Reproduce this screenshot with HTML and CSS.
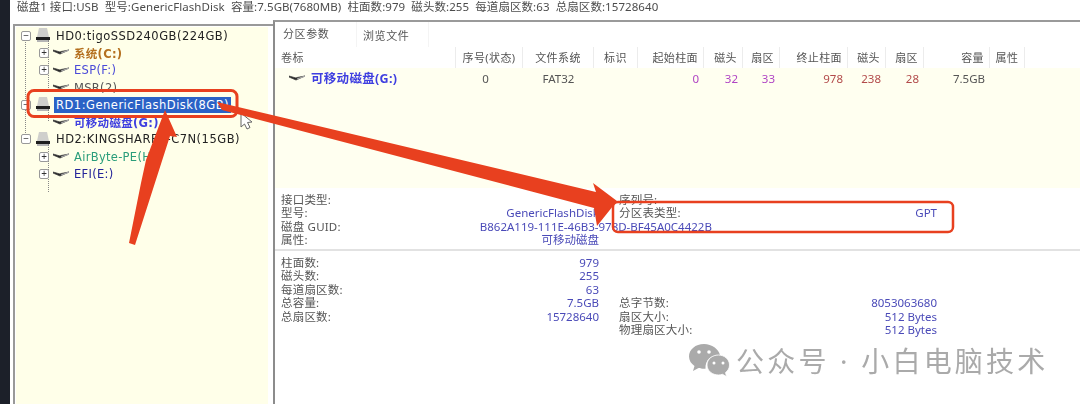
FILE: index.html
```html
<!DOCTYPE html>
<html lang="zh-CN">
<head>
  <meta charset="UTF-8">
  <title>分区信息</title>
  <link rel="stylesheet" href="styles.css">
</head>
<body>

<svg class="icon-defs" width="0" height="0">
  <symbol id="disk" viewBox="0 0 14 15">
    <path d="M3 0h8l2 9H1z" fill="#cfcfcc"/>
    <rect x="0" y="9" width="14" height="3" fill="#1f1f1f"/>
    <rect x="1" y="12" width="12" height="2" fill="#b5b5b5"/>
  </symbol>
  <symbol id="part" viewBox="0 0 16 7">
    <path d="M0 2l7 3 9-4-8 1.5-1 .5-7-2z" fill="#1f1f1f" stroke="#444" stroke-width=".8"/>
    <path d="M8 4l8-3" stroke="#aaa" stroke-width="1.2"/>
  </symbol>
</svg>

<div class="window">
  <div class="rail"></div>
  <div class="main">

    <!-- Barra superior -->
    <div class="status">磁盘1 接口:USB &nbsp;型号:GenericFlashDisk &nbsp;容量:7.5GB(7680MB) &nbsp;柱面数:979 &nbsp;磁头数:255 &nbsp;每道扇区数:63 &nbsp;总扇区数:15728640</div>

    <div class="panes">

      <!-- Árbol de discos -->
      <div class="tree-pane">
        <div class="tree">
          <div class="tree-row"><span class="tree-box">−</span><svg class="disk-icon"><use href="#disk"/></svg><span class="disk-name">HD0:tigoSSD240GB(224GB)</span></div>
          <div class="tree-children">
            <div class="tree-row child"><span class="tree-box">+</span><svg class="part-icon"><use href="#part"/></svg><span class="part-name brown">系统(C:)</span></div>
            <div class="tree-row child"><span class="tree-box">+</span><svg class="part-icon"><use href="#part"/></svg><span class="part-name blue">ESP(F:)</span></div>
            <div class="tree-row child no-box"><svg class="part-icon"><use href="#part"/></svg><span class="part-name grey">MSR(2)</span></div>
          </div>
          <div class="tree-row"><span class="tree-box">−</span><svg class="disk-icon"><use href="#disk"/></svg><span class="disk-name selected">RD1:GenericFlashDisk(8GB)</span></div>
          <div class="tree-children short">
            <div class="tree-row child no-box"><svg class="part-icon"><use href="#part"/></svg><span class="part-name strong">可移动磁盘(G:)</span></div>
          </div>
          <div class="tree-row"><span class="tree-box">−</span><svg class="disk-icon"><use href="#disk"/></svg><span class="disk-name">HD2:KINGSHARES-C7N(15GB)</span></div>
          <div class="tree-children">
            <div class="tree-row child"><span class="tree-box">+</span><svg class="part-icon"><use href="#part"/></svg><span class="part-name green">AirByte-PE(H:)</span></div>
            <div class="tree-row child"><span class="tree-box">+</span><svg class="part-icon"><use href="#part"/></svg><span class="part-name navy">EFI(E:)</span></div>
          </div>
        </div>
      </div>

      <!-- Panel derecho -->
      <div class="right-pane">
        <div class="tabs">
          <div class="tab active">分区参数</div>
          <div class="tab">浏览文件</div>
        </div>

        <div class="part-table">
          <div class="head">卷标</div>
          <div class="head center">序号(状态)</div>
          <div class="head center">文件系统</div>
          <div class="head center">标识</div>
          <div class="head right">起始柱面</div>
          <div class="head right">磁头</div>
          <div class="head right">扇区</div>
          <div class="head right">终止柱面</div>
          <div class="head right">磁头</div>
          <div class="head right">扇区</div>
          <div class="head right">容量</div>
          <div class="head center">属性</div>

          <div class="cell vol"><svg class="part-icon"><use href="#part"/></svg><span class="strong">可移动磁盘(G:)</span></div>
          <div class="cell center seq">0</div>
          <div class="cell center">FAT32</div>
          <div class="cell"></div>
          <div class="cell right purple">0</div>
          <div class="cell right purple">32</div>
          <div class="cell right purple">33</div>
          <div class="cell right red">978</div>
          <div class="cell right red">238</div>
          <div class="cell right red">28</div>
          <div class="cell right">7.5GB</div>
          <div class="cell"></div>
        </div>
        <div class="table-rest"></div>

        <div class="info-grid first">
          <div class="info"><span>接口类型:</span><b></b></div>
          <div class="info"><span>序列号:</span><b></b></div>
          <div class="info"><span>型号:</span><b>GenericFlashDisk</b></div>
          <div class="info"><span>分区表类型:</span><b>GPT</b></div>
          <div class="info wide"><span>磁盘 GUID:</span><b class="guid">B862A119-111E-46B3-978D-BF45A0C4422B</b></div>
          <div class="info"><span>属性:</span><b>可移动磁盘</b></div>
        </div>

        <div class="info-grid second">
          <div class="info"><span>柱面数:</span><b>979</b></div>
          <div class="info"></div>
          <div class="info"><span>磁头数:</span><b>255</b></div>
          <div class="info"></div>
          <div class="info"><span>每道扇区数:</span><b>63</b></div>
          <div class="info"></div>
          <div class="info"><span>总容量:</span><b>7.5GB</b></div>
          <div class="info"><span>总字节数:</span><b>8053063680</b></div>
          <div class="info"><span>总扇区数:</span><b>15728640</b></div>
          <div class="info"><span>扇区大小:</span><b>512 Bytes</b></div>
          <div class="info"></div>
          <div class="info"><span>物理扇区大小:</span><b>512 Bytes</b></div>
        </div>
      </div>

    </div>
  </div>
</div>

<!-- Anotaciones encima de la captura -->
<svg class="marks" viewBox="0 0 1080 404">
  <path class="pointer" d="M241 113l0 14 3.500-3 2.500 5 3-1.500-2.500-5 4.500-.5z"/>
  <rect class="mark-box" x="28" y="90.500" width="209" height="26" rx="6"/>
  <rect class="mark-box thin" x="613" y="202" width="340" height="30" rx="5"/>
  <polygon class="arrow" points="165,110 177,137 170,136 135,245 129,243 141,183 146,160"/>
  <polygon class="arrow" points="217,102 596,192 593,183 617,201 597,226 594,208 222,110"/>
</svg>

<!-- Marca de agua -->
<div class="watermark">
  <svg class="wechat" viewBox="0 0 42 34">
    <path d="M16 1C7.500 1 1 6.500 1 13.500c0 4 2.200 7.200 5.500 9.500l-1.500 5 5.500-3c2 .6 3.500.8 5.500.8h1.500C17 17 23 12 31 12h1C30.500 6 24 1 16 1z" fill="#aaa"/>
    <path d="M41.500 22c0-6-5.500-10-11-10-6 0-11.500 4-11.500 10s5.500 10 11.500 10c1.500 0 2.500-.3 4-.7l4 2.300-1-4c2.500-2 4-4.500 4-7.600z" fill="#aaa" stroke="#fff" stroke-width=".8"/>
    <circle cx="11" cy="9" r="1.800" fill="#fff"/><circle cx="21" cy="9" r="1.800" fill="#fff"/>
    <circle cx="26" cy="20" r="1.500" fill="#fff"/><circle cx="35" cy="20" r="1.500" fill="#fff"/>
  </svg>
  <span>公众号 · 小白电脑技术</span>
</div>

</body>
</html>
```

FILE: styles.css
```css
body {
  margin: 0;
  width: 1080px;
  height: 404px;
  overflow: hidden;
  background-color: #fff;
  font-family: "Noto Sans", "Noto Sans CJK SC", sans-serif;
  font-size: 11.5px;
  color: #555;
}

.icon-defs {
  position: absolute;
}

.window {
  display: flex;
  height: 404px;
  filter: blur(0.35px);
}

.rail {
  width: 10px;
  background-color: #1c2029;
}

.main {
  flex: 1;
  display: flex;
  flex-direction: column;
  min-width: 0;
}

.status {
  height: 20px;
  padding-left: 7px;
  line-height: 14px;
  white-space: nowrap;
  font-size: 11.5px;
  letter-spacing: 0.07px;
  color: #4c4c4c;
}

.panes {
  flex: 1;
  display: flex;
  min-height: 0;
}

/* Árbol */
.tree-pane {
  width: 252px;
  margin: 4px 0 0 3px;
  padding: 1px 5px 0 1px;
  border-left: 2px solid #999;
  border-top: 2px solid #999;
}

.tree {
  position: relative;
  height: 100%;
  padding: 0 0 0 5px;
  box-sizing: border-box;
  background-color: #ffffe9;
}

.tree::before {
  content: "";
  position: absolute;
  left: 9px;
  top: 10px;
  height: 104px;
  border-left: 1px dotted #888;
}

.tree-row {
  display: flex;
  align-items: center;
  height: 17.3px;
  white-space: nowrap;
  position: relative;
}

.tree-children {
  position: relative;
}

.tree-children::before {
  content: "";
  position: absolute;
  left: 27px;
  top: -4px;
  height: 48px;
  border-left: 1px dotted #888;
}

.tree-children.short::before {
  height: 12px;
}

.tree-row.child {
  padding-left: 18px;
}

.tree-row.no-box {
  padding-left: 28px;
}

.tree-box {
  flex: none;
  position: relative;
  z-index: 1;
  width: 10px;
  height: 10px;
  box-sizing: border-box;
  border: 1px solid #999;
  border-radius: 2px;
  background-color: #fff;
  font-size: 10px;
  line-height: 7px;
  text-align: center;
  color: #333;
}

.disk-icon {
  flex: none;
  width: 14px;
  height: 15px;
  margin-left: 5px;
}

.part-icon {
  flex: none;
  width: 16px;
  height: 7px;
  margin-left: 4px;
}

.disk-name {
  margin-left: 5px;
  padding: 0 1px;
  font-family: "DejaVu Sans", "Noto Sans CJK SC", sans-serif;
  font-size: 11.5px;
  letter-spacing: 0.5px;
  color: #222;
}

.disk-name.selected {
  margin-left: 4px;
  padding: 1px 2px;
  background-color: #2b62c6;
  color: #fff;
}

.part-name {
  margin-left: 5px;
  font-family: "DejaVu Sans", "Noto Sans CJK SC", sans-serif;
  font-size: 11.5px;
  letter-spacing: 0.3px;
}

.brown { color: #b5701f; font-weight: bold; }
.blue { color: #4a4ad8; }
.grey { color: #555; }
.green { color: #2a9d7a; }
.navy { color: #24249a; }

.strong {
  color: #3f3fe0;
  font-weight: bold;
}

/* Panel derecho */
.right-pane {
  flex: 1;
  min-width: 0;
  border-left: 2px solid #8c8c8c;
  border-top: 2px solid #9a9a9a;
}

.tabs {
  display: flex;
  height: 25px;
}

.tab {
  padding: 4px 0 0 8px;
  font-size: 11px;
  letter-spacing: 0.6px;
  line-height: 16px;
}

.tab.active {
  width: 73px;
}

.tab + .tab {
  padding-top: 6px;
  border-left: 1px solid #f4f4f4;
  border-right: 1px solid #f4f4f4;
  width: 65px;
  padding-left: 6px;
}

.part-table {
  display: grid;
  grid-template-columns: 181px 67px 71px 44px 66px 39px 37px 68px 38px 38px 66px 35px;
  grid-template-rows: 21px 21px;
  background: linear-gradient(#fff 21px, #fffff0 21px);
}

.head,
.cell {
  padding: 0 5px;
  line-height: 21px;
  white-space: nowrap;
  overflow: hidden;
}

.head {
  border-right: 1px solid #ececec;
  letter-spacing: 0.4px;
  font-size: 11px;
  color: #555;
}

.head:first-child {
  padding-left: 6px;
}

.center { text-align: center; }
.right { text-align: right; }

.seq {
  padding-right: 13px;
}

.vol {
  display: flex;
  align-items: center;
  padding-left: 10px;
}

.vol .strong {
  margin-left: 6px;
  font-size: 12.5px;
  letter-spacing: 0.3px;
}

.purple { color: #b044c4; }
.red { color: #b24a4a; }

.table-rest {
  height: 99px;
  background-color: #fffff0;
}

.info-grid {
  display: grid;
  grid-template-columns: 318px 318px;
  column-gap: 20px;
  padding-left: 6px;
  grid-auto-rows: 13.4px;
  line-height: 13.4px;
}

.info-grid.first {
  padding-top: 5px;
  padding-bottom: 2px;
  height: 54px;
  border-bottom: 2px solid #e2e2e2;
}

.info-grid.second {
  padding-top: 5px;
}

.info {
  display: flex;
  justify-content: space-between;
  white-space: nowrap;
  letter-spacing: 0.2px;
}

.info b {
  font-weight: normal;
  color: #4a4ab8;
  letter-spacing: 0;
}

.info.wide {
  grid-column: span 2;
  justify-content: flex-start;
}

.guid {
  margin-left: 139px;
}

/* Anotaciones */
.marks {
  position: absolute;
  left: 0;
  top: 0;
  width: 1080px;
  height: 404px;
}

.pointer {
  fill: #fff;
  stroke: #666;
  stroke-width: 1;
}

.mark-box {
  fill: none;
  stroke: #e8401f;
  stroke-width: 3;
}

.mark-box.thin {
  stroke-width: 2.500;
}

.arrow {
  fill: #e8401f;
}

.watermark {
  position: absolute;
  left: 688px;
  top: 340px;
  display: flex;
  align-items: center;
  gap: 6px;
  color: #aaa;
}

.wechat {
  width: 42px;
  height: 34px;
}

.watermark span {
  font-size: 28px;
  letter-spacing: 3.2px;
  white-space: nowrap;
}
```
